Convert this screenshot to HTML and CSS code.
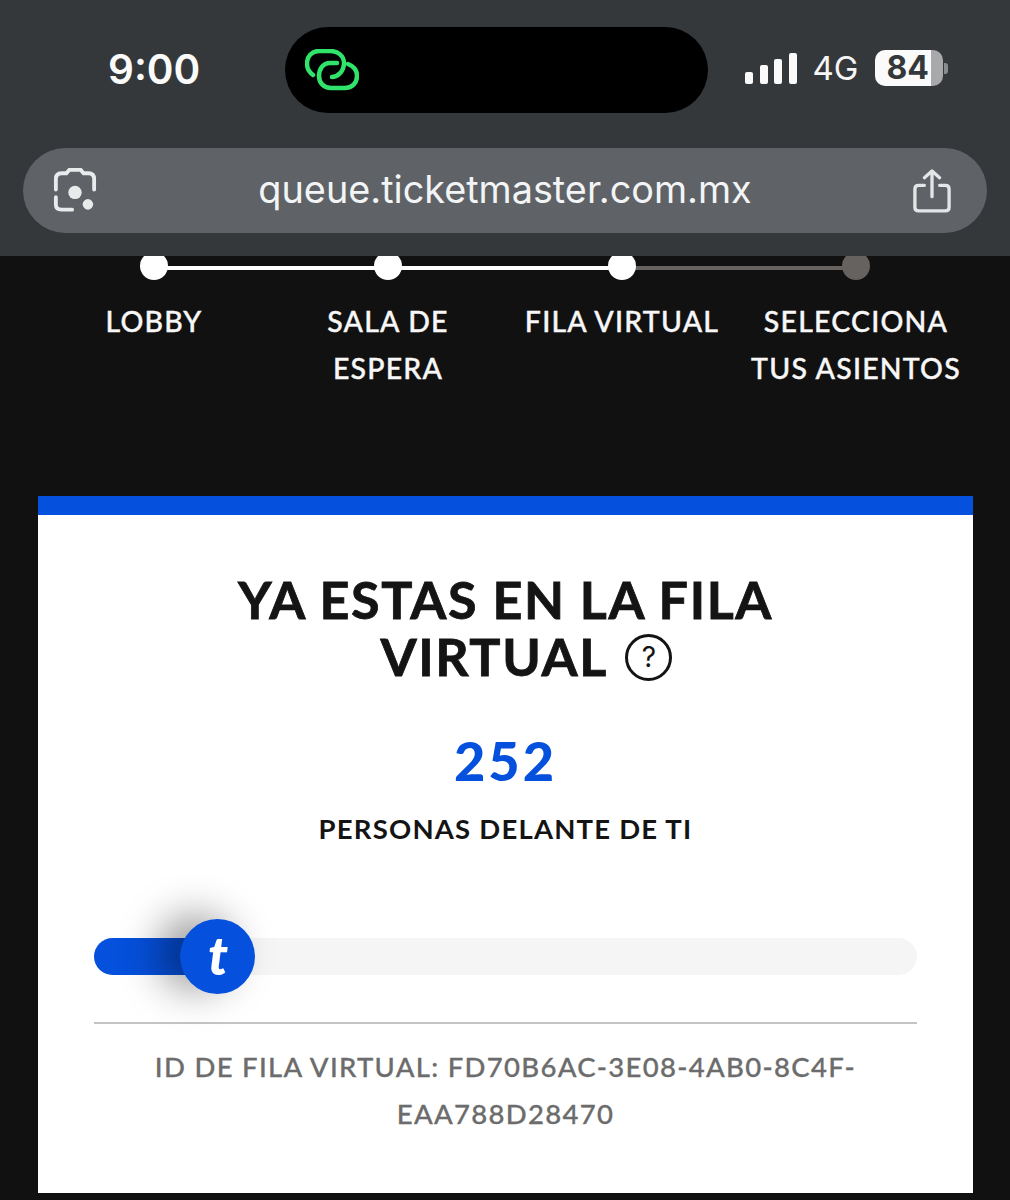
FILE: index.html
```html
<!DOCTYPE html>
<html>
<head>
    <title>Fila Virtual</title>
    <link rel="stylesheet" href="styles.css">
</head>
<body>
    <header class="phone-bar">
        <div class="status-row">
            <div class="time">9:00</div>
            <div class="island">
                <svg class="link-icon" width="54" height="42" viewBox="0 0 54 42" fill="none" stroke="#2fe36b" stroke-width="4.5" stroke-linecap="round">
                    <path d="M8 26C4 23 2 20 2 15C2 7 7 2 14 2H25C33 2 39 7 39 14C39 22 33 28 27 28"/>
                    <path d="M32 14H25C18 14 14 20 14 27C14 34 19 39 26 39H40C47 39 52 34 52 27C52 21 48 17 43 15"/>
                </svg>
            </div>
            <div class="status-right">
                <div class="signal">
                    <span class="bar bar-1"></span>
                    <span class="bar bar-2"></span>
                    <span class="bar bar-3"></span>
                    <span class="bar bar-4"></span>
                </div>
                <div class="network">4G</div>
                <div class="battery">
                    <div class="battery-body">84</div>
                    <div class="battery-nub"></div>
                </div>
            </div>
        </div>
        <div class="url-bar">
            <svg width="44" height="45" viewBox="0 0 46 46" fill="none" stroke="#e8eaec" stroke-width="4" stroke-linecap="round">
                <path d="M3 22V11C3 7 5 5 9 5H14L17 1.500H29L32 5H37C41 5 43 7 43 11V22"/>
                <path d="M3 30V38C3 41 5 43 9 43H20"/>
                <circle cx="23" cy="25" r="7" fill="#e8eaec" stroke="none"/>
                <circle cx="36.500" cy="37.500" r="5.500" fill="#e8eaec" stroke="none"/>
            </svg>
            <div class="url-text">queue.ticketmaster.com.mx</div>
            <svg width="38" height="46" viewBox="0 0 40 46" fill="none" stroke="#e3e5e7" stroke-width="3.500" stroke-linecap="round" stroke-linejoin="round">
                <path d="M12 17H6C3.500 17 2 18.500 2 21V40C2 42.500 3.500 44 6 44H34C36.500 44 38 42.500 38 40V21C38 18.500 36.500 17 34 17H28"/>
                <path d="M20 29V2M12 9L20 2L28 9"/>
            </svg>
        </div>
    </header>

    <div class="steps">
        <div class="step done">
            <span class="dot"></span>
            <div class="step-label">LOBBY</div>
        </div>
        <div class="step done">
            <span class="dot"></span>
            <div class="step-label">SALA DE<br>ESPERA</div>
        </div>
        <div class="step current">
            <span class="dot"></span>
            <div class="step-label">FILA VIRTUAL</div>
        </div>
        <div class="step last">
            <span class="dot"></span>
            <div class="step-label">SELECCIONA<br>TUS ASIENTOS</div>
        </div>
    </div>

    <main class="card">
        <h1 class="card-title">
            YA ESTAS EN LA FILA<br>VIRTUAL
            <span class="help">?</span>
        </h1>
        <div class="count">252</div>
        <div class="count-label">PERSONAS DELANTE DE TI</div>
        <div class="track">
            <div class="fill" style="width: 15%"></div>
            <div class="thumb" style="left: 15%">t</div>
        </div>
        <div class="divider"></div>
        <div class="queue-id">ID DE FILA VIRTUAL: FD70B6AC-3E08-4AB0-8C4F-<br>EAA788D28470</div>
    </main>
</body>
</html>
```
FILE: styles.css
```css
body {
    margin: 0;
    background-color: #111111;
    font-family: Lato, "Open Sans", sans-serif;
}

.phone-bar {
    height: 256px;
    box-sizing: border-box;
    padding-top: 27px;
    background-color: #35383b;
}

.status-row {
    display: flex;
    align-items: center;
    height: 86px;
}

.time {
    flex: none;
    width: 285px;
    box-sizing: border-box;
    padding-bottom: 2px;
    padding-left: 108px;
    color: #fafafa;
    font-family: Inter, sans-serif;
    font-size: 40.500px;
    font-weight: 600;
}

.island {
    flex: none;
    display: flex;
    align-items: center;
    width: 423px;
    height: 86px;
    box-sizing: border-box;
    padding-left: 20px;
    border-radius: 43px;
    background-color: #000;
}

.status-right {
    display: flex;
    align-items: center;
    padding-bottom: 4px;
    padding-left: 37px;
}

.signal {
    display: flex;
    align-items: flex-end;
    gap: 6.500px;
    height: 31px;
    margin-right: 16px;
}

.bar {
    width: 8px;
    border-radius: 2px;
    background-color: #fafafa;
}

.bar-1 { height: 12px; }
.bar-2 { height: 19px; }
.bar-3 { height: 25px; }
.bar-4 { height: 31px; }

.network {
    margin-right: 17px;
    color: #f5f5f5;
    font-family: Inter, sans-serif;
    font-size: 33px;
    font-weight: 400;
}

.battery {
    display: flex;
    align-items: center;
}

.battery-body {
    width: 68px;
    height: 36px;
    box-sizing: border-box;
    padding-left: 11px;
    border-radius: 10px;
    background: linear-gradient(90deg, #fafafa 82%, #a8a9aa 82%);
    color: #35383b;
    font-family: Inter, sans-serif;
    font-size: 32px;
    font-weight: 700;
    line-height: 36px;
}

.battery-nub {
    width: 4px;
    height: 11px;
    margin-left: 1px;
    border-radius: 0 3px 3px 0;
    background-color: #8b8c8d;
}

.url-bar {
    display: flex;
    align-items: center;
    justify-content: space-between;
    height: 85px;
    margin: 35px 23px 0;
    padding: 0 36px 0 30px;
    border-radius: 43px;
    background-color: #5f6367;
}

.url-text {
    padding-bottom: 4px;
    color: #f3f4f5;
    font-family: Inter, sans-serif;
    font-size: 37.800px;
    font-weight: 400;
}

.steps {
    display: grid;
    grid-template-columns: repeat(4, 234px);
    height: 240px;
    padding: 0 37px;
    overflow: hidden;
}

.step {
    position: relative;
    text-align: center;
}

.step::after {
    content: "";
    position: absolute;
    top: 10px;
    left: 50%;
    width: 100%;
    height: 4px;
    background-color: #fff;
}

.step.current::after {
    background-color: #66625f;
}

.step.last::after {
    display: none;
}

.dot {
    position: relative;
    z-index: 1;
    display: block;
    width: 28px;
    height: 28px;
    margin: -4px auto 0;
    border-radius: 50%;
    background-color: #fff;
}

.step.last .dot {
    background-color: #66625f;
}

.step-label {
    margin-top: 18px;
    color: #f7f7f7;
    font-size: 28.500px;
    font-weight: 500;
    letter-spacing: 1.200px;
    line-height: 47px;
    -webkit-text-stroke: 0.4px #f7f7f7;
}

.card {
    height: 697px;
    box-sizing: border-box;
    margin: 0 37px 7px 38px;
    padding: 0 56px;
    border-top: 19px solid #0550dc;
    background-color: #fff;
    text-align: center;
}

.card-title {
    margin: 56px 0 0;
    color: #141414;
    font-size: 52px;
    font-weight: 700;
    letter-spacing: 1.600px;
    line-height: 57px;
    -webkit-text-stroke: 0.8px #141414;
}

.help {
    display: inline-block;
    width: 41px;
    height: 41px;
    margin-left: 5px;
    margin-right: -42px;
    border: 3px solid #141414;
    border-radius: 50%;
    font-family: Inter, sans-serif;
    font-size: 28px;
    font-weight: 400;
    letter-spacing: 0;
    line-height: 41px;
    vertical-align: 9px;
    -webkit-text-stroke: 0;
}

.count {
    margin-top: 42px;
    color: #0550dc;
    font-size: 54px;
    font-weight: 900;
    letter-spacing: 3px;
    line-height: 68px;
}

.count-label {
    margin-top: 14px;
    color: #141414;
    font-size: 27.500px;
    font-weight: 700;
    letter-spacing: 1.200px;
    line-height: 40px;
}

.track {
    position: relative;
    height: 37px;
    margin-top: 89px;
    border-radius: 19px;
    background-color: #f5f5f5;
}

.fill {
    height: 37px;
    border-radius: 19px 0 0 19px;
    background-color: #0550dc;
}

.thumb {
    position: absolute;
    top: -19px;
    width: 75px;
    height: 75px;
    margin-left: -37px;
    border-radius: 50%;
    background-color: #0550dc;
    box-shadow: -22px -4px 40px rgba(0, 0, 0, 0.4);
    color: #fff;
    font-size: 54px;
    font-style: italic;
    font-weight: 900;
    line-height: 72px;
}

.divider {
    height: 2px;
    margin-top: 47px;
    background-color: #c4c4c4;
}

.queue-id {
    margin: 19px -56px 0;
    color: #6c6c6c;
    font-size: 27.500px;
    font-weight: 500;
    letter-spacing: 1.300px;
    line-height: 47px;
    -webkit-text-stroke: 0.3px #6c6c6c;
}
```
